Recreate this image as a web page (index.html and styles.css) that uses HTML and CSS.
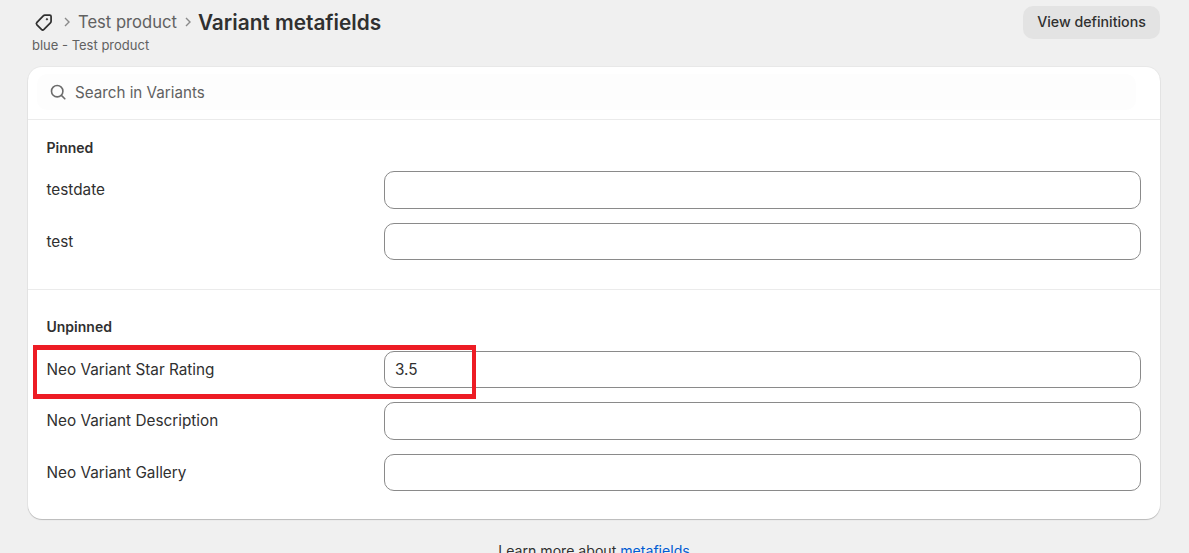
FILE: index.html
```html
<!DOCTYPE html>
<html lang="en">

<head>
    <meta charset="UTF-8">
    <meta name="viewport" content="width=device-width, initial-scale=1.0">
    <title>Variant metafields</title>
    <link rel="stylesheet" href="styles.css">
</head>

<body>
    <div class="page">
        <header class="page-header">
            <div class="heading">
                <div class="crumbs">
                    <svg class="tag-icon" viewBox="0 0 20 20" width="23" height="23" fill="none" stroke="#303030" stroke-width="1.5" stroke-linejoin="round">
                        <path d="M11.2 3.6h4.2a1.2 1.2 0 0 1 1.2 1.2v4.2a2 2 0 0 1-.6 1.4l-5.6 5.6a1.6 1.6 0 0 1-2.2 0l-3.9-3.9a1.6 1.6 0 0 1 0-2.2l5.5-5.7a2 2 0 0 1 1.4-.6z" />
                        <circle cx="13" cy="7.2" r="0.6" fill="#303030" stroke-width="0.8" />
                    </svg>
                    <svg class="chevron" viewBox="0 0 8 12" width="8" height="12" fill="none" stroke="#8a8a8a" stroke-width="1.4">
                        <path d="M2 2l4 4-4 4" />
                    </svg>
                    <span class="crumb">Test product</span>
                    <svg class="chevron" viewBox="0 0 8 12" width="8" height="12" fill="none" stroke="#8a8a8a" stroke-width="1.4">
                        <path d="M2 2l4 4-4 4" />
                    </svg>
                    <h1>Variant metafields</h1>
                </div>
                <p class="subtitle">blue - Test product</p>
            </div>
            <button class="btn">View definitions</button>
        </header>

        <main class="card">
            <div class="search-row">
                <div class="search">
                    <svg viewBox="0 0 20 20" width="20" height="20" fill="none" stroke="#6b6b6b" stroke-width="1.6" stroke-linecap="round">
                        <circle cx="9.2" cy="9.2" r="5.7" />
                        <path d="M13.4 13.4l3.4 3.4" />
                    </svg>
                    <span>Search in Variants</span>
                </div>
            </div>

            <section class="group group-pinned">
                <h2>Pinned</h2>
                <div class="field"><label>testdate</label><div class="input"></div></div>
                <div class="field"><label>test</label><div class="input"></div></div>
            </section>

            <section class="group group-unpinned">
                <h2>Unpinned</h2>
                <div class="field"><label>Neo Variant Star Rating</label><div class="input">3.5</div></div>
                <div class="field"><label>Neo Variant Description</label><div class="input"></div></div>
                <div class="field"><label>Neo Variant Gallery</label><div class="input"></div></div>
            </section>
        </main>

        <p class="learn">Learn more about <a href="#">metafields</a></p>
    </div>

    <!-- red annotation drawn over the screenshot -->
    <div class="highlight"></div>
</body>

</html>
```

FILE: styles.css
```css
* {
    margin: 0;
    padding: 0;
    box-sizing: border-box;
}

html,
body {
    height: 100%;
    overflow: hidden;
}

body {
    position: relative;
    background-color: #f0f0f0;
    color: #303030;
    font-family: Inter, "Noto Sans", sans-serif;
    font-size: 15.3px;
}

.page {
    padding: 0 29px 0 28px;
}

/* Title bar */
.page-header {
    display: flex;
    justify-content: space-between;
    align-items: flex-start;
    height: 67px;
}

.heading {
    padding: 7px 0 0 4px;
}

.crumbs {
    display: flex;
    align-items: center;
    height: 30px;
}

.tag-icon {
    margin-right: 1px;
}

.chevron {
    margin: 0 7px;
}

.crumb {
    color: #616161;
    font-size: 16.6px;
}

h1 {
    margin-left: -1px;
    font-size: 20.8px;
    font-weight: 600;
    color: #303030;
}

.subtitle {
    color: #616161;
    font-size: 13px;
    line-height: 16px;
}

.btn {
    width: 137px;
    height: 33px;
    margin-top: 6px;
    padding-bottom: 2px;
    border: none;
    border-radius: 10px;
    background-color: #e3e3e3;
    color: #303030;
    font-family: inherit;
    font-size: 14.2px;
    font-weight: 500;
}

/* Main card */
.card {
    height: 452px;
    background-color: #fff;
    border-radius: 14px;
    box-shadow: 0 1px 1px rgba(0, 0, 0, 0.2), 0 0 0 1px rgba(0, 0, 0, 0.03);
}

.search-row {
    height: 53px;
    padding: 7px 24px 10px 9px;
    border-bottom: 1px solid #ebebeb;
}

.search {
    display: flex;
    align-items: center;
    gap: 7px;
    height: 36px;
    padding-left: 11px;
    background-color: #fdfdfd;
    border-radius: 10px;
    color: #616161;
    font-size: 15.2px;
}

.group {
    padding: 0 19px 0 18.5px;
}

.group-pinned {
    height: 170px;
    padding-top: 18.5px;
    border-bottom: 1px solid #ebebeb;
}

.group-unpinned {
    padding-top: 28.2px;
}

h2 {
    font-size: 14px;
    font-weight: 600;
    line-height: 17px;
    margin-bottom: 15.5px;
}

.field {
    display: flex;
    align-items: center;
    margin-bottom: 14px;
}

label {
    width: 337.5px;
    flex-shrink: 0;
}

.input {
    flex: 1;
    height: 37.5px;
    padding-left: 10px;
    line-height: 35.5px;
    background-color: #fff;
    border: 1px solid #8a8a8a;
    border-radius: 10px;
}

.learn {
    margin-top: 23px;
    font-size: 14.1px;
    text-align: center;
}

.learn a {
    color: #005bd3;
    text-decoration: none;
}

.highlight {
    position: absolute;
    left: 33px;
    top: 345px;
    width: 443px;
    height: 54px;
    border-style: solid;
    border-color: #ed1c24;
    border-width: 5px 4px;
}
```
